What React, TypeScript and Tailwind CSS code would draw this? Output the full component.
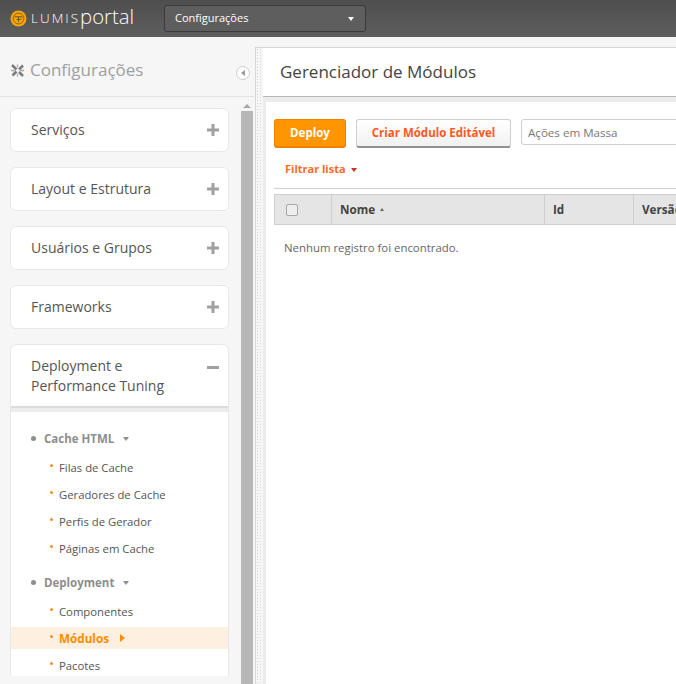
import React from "react";

const font = { fontFamily: '"Open Sans", sans-serif' };

function Card({ title }: { title: string }) {
  return (
    <div className="h-[44px] shrink-0 flex items-center justify-between rounded-[6px] border border-[#e8e8e8] bg-white pl-[20px] pr-[9px]">
      <span className="text-[14px] text-[#555] -mt-[2px]">{title}</span>
      <svg width="12" height="12" viewBox="0 0 12 12"><path d="M4.500 0h3v4.500h4.500v3h-4.500v4.500h-3v-4.500h-4.500v-3h4.500z" fill="#a0a0a0" /></svg>
    </div>
  );
}

function Group({ title }: { title: string }) {
  return (
    <div className="h-[27px] flex items-center pl-[20px] text-[11.500px] font-bold text-[#8e8e8e]">
      <span className="w-[5px] h-[5px] rounded-full bg-[#8e8e8e] mr-[8px]" />
      {title}
      <span className="ml-[9px] w-0 h-0 border-x-[3px] border-x-transparent border-t-[4px] border-t-[#8e8e8e]" />
    </div>
  );
}

function Item({ title, active }: { title: string; active?: boolean }) {
  return (
    <div className={`h-[22px] flex items-center pl-[39px] ${active ? "bg-[#fdf0e0] font-bold text-[#ff8c00] text-[11.700px]" : "text-[#555] text-[11.300px]"}`}>
      <span className="w-[3px] h-[3px] rounded-full bg-[#ff8c1a] mr-[6px] -mt-[3px]" />
      <span className="pt-[2px]">{title}</span>
      {active && <span className="ml-[11px] w-0 h-0 border-y-[4px] border-y-transparent border-l-[5px] border-l-[#ff8c00]" />}
    </div>
  );
}

export default function App() {
  return (
    <div style={font} className="w-[676px] h-[684px] overflow-hidden flex flex-col bg-[#f6f6f6]">
      <header className="h-[37px] shrink-0 flex items-center bg-gradient-to-b from-[#4e4e4e] to-[#5e5e5e]">
        <div className="ml-[10px] flex items-center w-[154px]">
          <svg width="17" height="17" viewBox="0 0 17 17" className="shrink-0">
            <circle cx="8.500" cy="8.500" r="8" fill="#f7a600" />
            <circle cx="8.500" cy="8.500" r="5.400" fill="#f7a600" stroke="#6a5520" strokeWidth="0.800" />
            <path d="M4.500 6.800h8M8.500 6.800v5.200M6.500 9.400h5" stroke="#6a5520" strokeWidth="1" fill="none" />
          </svg>
          <span className="ml-[4px] text-[13.500px] tracking-[2px] text-white font-light">LUMIS</span>
          <span className="text-[20.300px] leading-[20px] text-white font-light -mt-[5px]">portal</span>
        </div>
        <div className="w-[202px] h-[27px] flex items-center justify-between rounded-[3px] border border-[#3a3a3a] bg-[#5e5e5e] pl-[10px] pr-[11px] text-[11px] text-white">
          Configurações
          <span className="w-0 h-0 border-x-[3px] border-x-transparent border-t-[4px] border-t-white" />
        </div>
      </header>
      <div className="flex flex-1 min-h-0">
        <aside className="w-[254px] shrink-0 flex flex-col">
          <div className="h-[60px] shrink-0 flex items-start justify-between border-b border-[#e2e2e2] pl-[10px] pr-[4px]">
            <div className="flex items-center gap-[5px] mt-[21px]">
              <svg width="15" height="15" viewBox="0 0 15 15" fill="none" stroke="#7d7d7d" className="shrink-0">
                <path d="M2 2l4.500 4.500M13 2.500L9 6.500M2.500 12.500L6.500 8.500M9 9l4 4" strokeWidth="2.500" />
                <path d="M5 7.500H1M14 7.500h-4M7.500 1.500v3M7.500 10.500v3" strokeWidth="1.300" stroke="#a8a8a8" />
              </svg>
              <span className="text-[17px] leading-[24px] text-[#a0a0a0]">Configurações</span>
            </div>
            <div className="w-[14px] h-[14px] mt-[29px] flex items-center justify-center rounded-full border border-[#cfcfcf] bg-white">
              <span className="w-0 h-0 border-y-[3px] border-y-transparent border-r-[4px] border-r-[#999]" />
            </div>
          </div>
          <div className="flex flex-1 min-h-0">
            <div className="w-[219px] ml-[10px] pt-[11px] flex flex-col gap-[15px] overflow-hidden">
              <Card title="Serviços" />
              <Card title="Layout e Estrutura" />
              <Card title="Usuários e Grupos" />
              <Card title="Frameworks" />
              <div className="shrink-0 rounded-t-[6px] border-x border-t border-[#e8e8e8] bg-white">
                <div className="h-[63px] flex items-start justify-between border-b-2 border-[#dcdcdc] pl-[20px] pr-[9px] pt-[11px]">
                  <span className="text-[14px] leading-[20px] text-[#555]">Deployment e<br />Performance Tuning</span>
                  <span className="w-[12px] h-[3px] mt-[10px] bg-[#a0a0a0]" />
                </div>
                <div className="h-[4px] bg-[#ececec]" />
                <div className="pt-[13px]">
                  <Group title="Cache HTML" />
                  <div className="flex flex-col gap-[5px] pt-[4px] pb-[10px]">
                    <Item title="Filas de Cache" />
                    <Item title="Geradores de Cache" />
                    <Item title="Perfis de Gerador" />
                    <Item title="Páginas em Cache" />
                  </div>
                  <Group title="Deployment" />
                  <div className="flex flex-col gap-[5px] pt-[4px]">
                    <Item title="Componentes" />
                    <Item title="Módulos" active />
                    <Item title="Pacotes" />
                  </div>
                </div>
              </div>
            </div>
            <div className="w-[12px] ml-[12px] flex flex-col items-center pt-[7px]">
              <span className="w-0 h-0 border-x-[4px] border-x-transparent border-b-[4px] border-b-[#a8a8a8] mb-[3px]" />
              <div className="flex-1 w-[12px] bg-[#b7b7b7]" />
            </div>
          </div>
        </aside>
        <div className="w-[8px] shrink-0 mt-[10px] ml-[1px] border-l border-t border-[#d8d8d8] bg-[radial-gradient(#d5d5d5_0.7px,transparent_0.8px)] bg-[length:3px_3px]" />
        <main className="flex-1 min-w-0 mt-[10px] border-t border-[#d8d8d8] flex flex-col bg-white overflow-hidden">
          <div className="h-[49px] shrink-0 flex items-center border-b border-[#b8b8b8] pl-[17px] text-[17px] text-[#444]">
            Gerenciador de Módulos
          </div>
          <div className="flex-1 border-l-[3px] border-t-[5px] border-[#ececec] pl-[8px] pt-[17px] bg-white whitespace-nowrap">
            <div className="flex items-start">
              <button className="shrink-0 w-[72px] h-[29px] rounded-[3px] border border-[#f08000] border-b-2 bg-[#ff9500] text-[11.500px] font-bold text-white">Deploy</button>
              <button className="shrink-0 ml-[10px] w-[155px] h-[29px] rounded-[3px] border border-[#cfcfcf] border-b-2 border-b-[#909090] bg-gradient-to-b from-white to-[#f1f1f1] text-[11.500px] font-bold text-[#ff5a1f]">Criar Módulo Editável</button>
              <div className="shrink-0 ml-[10px] w-[200px] h-[26px] flex items-center rounded-[3px] border border-[#d0d0d0] pl-[6px] pt-[1px] text-[11.600px] text-[#777]">Ações em Massa</div>
            </div>
            <div className="h-[40px] flex items-center pl-[11px] pt-[3px] text-[11px] font-bold text-[#ff6a1f]">
              Filtrar lista
              <span className="ml-[5px] w-0 h-0 border-x-[3px] border-x-transparent border-t-[4px] border-t-[#c8302a]" />
            </div>
            <div className="h-[1px] bg-[#d0d0d0] mb-[5px]" />
            <div className="flex h-[31px] w-[500px] border border-[#cfcfcf] bg-[#e5e5e5] text-[11.700px] font-bold text-[#444]">
              <div className="w-[57px] flex items-center pl-[11px] border-r border-[#cfcfcf]">
                <span className="w-[12px] h-[12px] rounded-[2px] border border-[#a8a8a8] bg-[#eee]" />
              </div>
              <div className="w-[213px] flex items-center pl-[8px] border-r border-[#cfcfcf]">
                Nome
                <span className="ml-[5px] w-0 h-0 border-x-[2.500px] border-x-transparent border-b-[3px] border-b-[#666]" />
              </div>
              <div className="w-[89px] flex items-center pl-[8px] border-r border-[#cfcfcf]">Id</div>
              <div className="flex-1 flex items-center pl-[8px]">Versão</div>
            </div>
            <div className="pl-[10px] pt-[14px] text-[11.400px] text-[#666]">Nenhum registro foi encontrado.</div>
          </div>
        </main>
      </div>
    </div>
  );
}
